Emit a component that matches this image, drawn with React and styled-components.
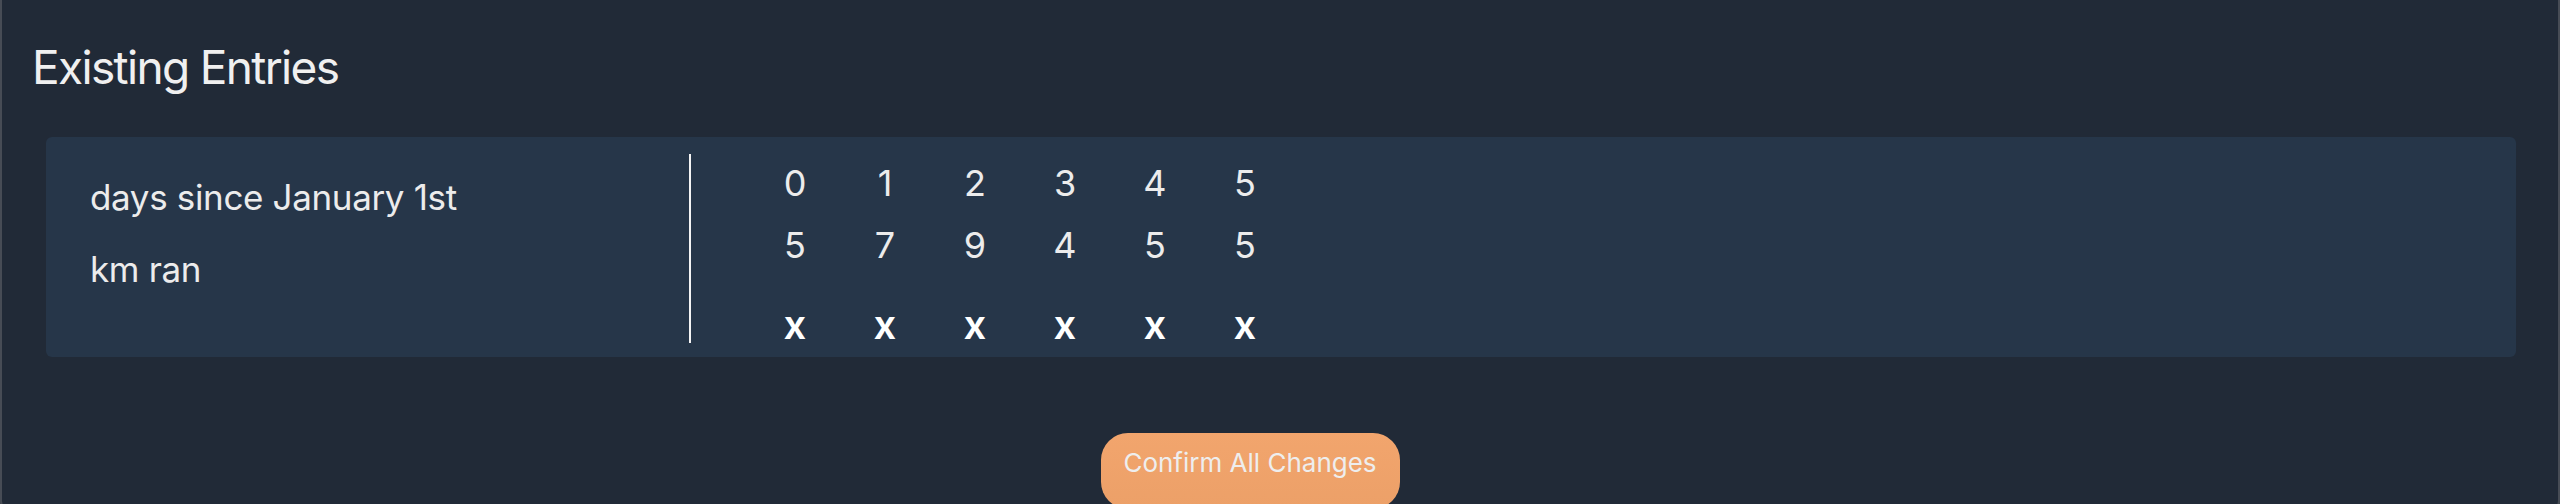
import styled, { createGlobalStyle } from 'styled-components'

const GlobalStyle = createGlobalStyle`
  html, body {
    margin: 0;
    padding: 0;
    background-color: #3b4048;
    overflow: hidden;
  }
  body {
    font-family: Inter, "Liberation Sans", sans-serif;
    color: #ededed;
  }
`

const Panel = styled.div`
  box-sizing: border-box;
  width: 2560px;
  min-height: 508px;
  background-color: #212a37;
  border: 2px solid #474c55;
  border-top: none;
  border-radius: 0 0 10px 10px;
  display: flex;
  flex-direction: column;
`

const Title = styled.h2`
  margin: 0;
  padding: 39px 0 0 30px;
  font-size: 46px;
  line-height: 56px;
  font-weight: 400;
  letter-spacing: -0.036em;
  color: #f0f0f0;
`

const Card = styled.div`
  margin: 42px 42px 0 44px;
  padding: 17px 0 14px;
  background-color: #263649;
  border-radius: 6px;
  display: flex;
  align-items: stretch;
`

const Labels = styled.div`
  box-sizing: border-box;
  width: 645px;
  padding: 19px 0 0 44px;
  border-right: 2px solid #f4f4f4;
  display: flex;
  flex-direction: column;
  gap: 24px;
`

const Label = styled.div`
  font-size: 35px;
  line-height: 48px;
  letter-spacing: -0.01em;
  color: #ececec;
`

const Entries = styled.div`
  display: flex;
  padding-left: 59px;
`

const Entry = styled.div`
  width: 90px;
  display: flex;
  flex-direction: column;
  align-items: center;
`

const Value = styled.div`
  font-size: 36px;
  line-height: 58px;
  color: #ececec;
  & + & {
    margin-top: 4px;
  }
`

const RemoveButton = styled.button`
  margin-top: 33px;
  padding: 0;
  border: none;
  background: none;
  font-family: Inter, "Liberation Sans", sans-serif;
  font-size: 40px;
  font-weight: 600;
  line-height: 36px;
  color: #ffffff;
  cursor: pointer;
`

const Footer = styled.div`
  display: flex;
  justify-content: center;
  padding: 76px 60px 0 0;
`

const ConfirmButton = styled.button`
  box-sizing: border-box;
  width: 299px;
  height: 76px;
  padding: 14px 0 30px;
  border: none;
  border-radius: 27px;
  background: linear-gradient(#f2a56d, #eca068);
  font-family: Inter, "Liberation Sans", sans-serif;
  font-size: 26px;
  line-height: 32px;
  color: #eeeeee;
  cursor: pointer;
`

const entries = [
  { day: 0, km: 5 },
  { day: 1, km: 7 },
  { day: 2, km: 9 },
  { day: 3, km: 4 },
  { day: 4, km: 5 },
  { day: 5, km: 5 },
]

export default function App() {
  return (
    <>
      <GlobalStyle />
      <Panel>
        <Title>Existing Entries</Title>
        <Card>
          <Labels>
            <Label>days since January 1st</Label>
            <Label>km ran</Label>
          </Labels>
          <Entries>
            {entries.map((entry) => (
              <Entry key={entry.day}>
                <Value>{entry.day}</Value>
                <Value>{entry.km}</Value>
                <RemoveButton>x</RemoveButton>
              </Entry>
            ))}
          </Entries>
        </Card>
        <Footer>
          <ConfirmButton>Confirm All Changes</ConfirmButton>
        </Footer>
      </Panel>
    </>
  )
}
